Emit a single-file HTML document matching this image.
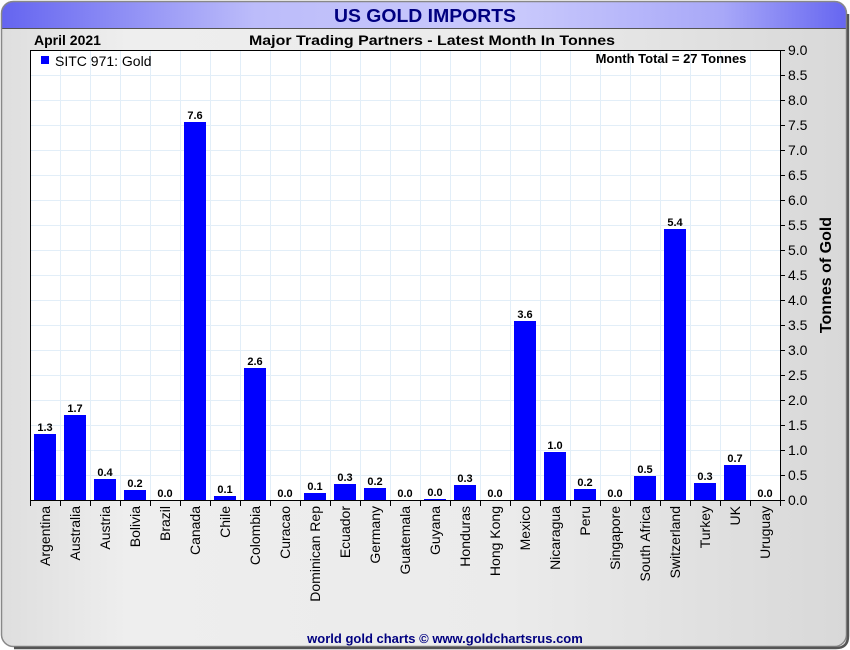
<!DOCTYPE html>
<html><head><style>
html,body{margin:0;padding:0;width:850px;height:650px;overflow:hidden;background:#fff}
svg{display:block;font-family:"Liberation Sans",Arial,sans-serif}
</style></head><body>
<svg width="850" height="650" viewBox="0 0 850 650">
<defs>
<linearGradient id="bg" x1="0" y1="0" x2="1" y2="0"><stop offset="0" stop-color="#dedede"/><stop offset="0.15" stop-color="#eeeeee"/><stop offset="0.6" stop-color="#ebebeb"/><stop offset="1" stop-color="#d8d8d8"/></linearGradient>
<linearGradient id="tb" x1="0" y1="0" x2="1" y2="0"><stop offset="0" stop-color="#6464f0"/><stop offset="0.3" stop-color="#bcbcfa"/><stop offset="0.6" stop-color="#cacafc"/><stop offset="0.85" stop-color="#a8a8f8"/><stop offset="1" stop-color="#6464f0"/></linearGradient>
<clipPath id="cp"><rect x="1" y="1" width="846" height="646" rx="12"/></clipPath>
</defs>
<rect x="0" y="0" width="850" height="650" fill="#fff"/>
<g clip-path="url(#cp)">
<rect x="0" y="0" width="850" height="650" fill="url(#bg)"/>
<rect x="0" y="0" width="850" height="28" fill="url(#tb)"/>
<line x1="0" y1="28.5" x2="850" y2="28.5" stroke="#555" stroke-width="1"/>
</g>
<rect x="1.5" y="1.5" width="845" height="645" rx="12" fill="none" stroke="#888" stroke-width="1.5"/>
<path d="M848 14 V636 Q848 648 836 648 H14" fill="none" stroke="#555" stroke-width="2.5"/>
<text x="425" y="22" text-anchor="middle" font-size="18" font-weight="bold" fill="#000080" textLength="182" lengthAdjust="spacingAndGlyphs">US GOLD IMPORTS</text>
<text x="34" y="45" font-size="14" font-weight="bold" fill="#000">April 2021</text>
<text x="432" y="45" text-anchor="middle" font-size="14" font-weight="bold" fill="#000" textLength="366" lengthAdjust="spacingAndGlyphs">Major Trading Partners - Latest Month In Tonnes</text>
<rect x="30" y="50" width="750" height="450" fill="#fff"/>
<g stroke="#e2eef8" stroke-width="1">
<path d="M60.5 50V500M90.5 50V500M120.5 50V500M150.5 50V500M180.5 50V500M210.5 50V500M240.5 50V500M270.5 50V500M300.5 50V500M330.5 50V500M360.5 50V500M390.5 50V500M420.5 50V500M450.5 50V500M480.5 50V500M510.5 50V500M540.5 50V500M570.5 50V500M600.5 50V500M630.5 50V500M660.5 50V500M690.5 50V500M720.5 50V500M750.5 50V500"/>
<path d="M30 75.5H780M30 100.5H780M30 125.5H780M30 150.5H780M30 175.5H780M30 200.5H780M30 225.5H780M30 250.5H780M30 275.5H780M30 300.5H780M30 325.5H780M30 350.5H780M30 375.5H780M30 400.5H780M30 425.5H780M30 450.5H780M30 475.5H780"/>
</g>
<rect x="30.5" y="50.5" width="750" height="450" fill="none" stroke="#000" stroke-width="1"/>
<g stroke="#000" stroke-width="1">
<path d="M30.5 500V506M60.5 500V506M90.5 500V506M120.5 500V506M150.5 500V506M180.5 500V506M210.5 500V506M240.5 500V506M270.5 500V506M300.5 500V506M330.5 500V506M360.5 500V506M390.5 500V506M420.5 500V506M450.5 500V506M480.5 500V506M510.5 500V506M540.5 500V506M570.5 500V506M600.5 500V506M630.5 500V506M660.5 500V506M690.5 500V506M720.5 500V506M750.5 500V506M780.5 500V506"/>
<path d="M780 50.5h5M780 75.5h5M780 100.5h5M780 125.5h5M780 150.5h5M780 175.5h5M780 200.5h5M780 225.5h5M780 250.5h5M780 275.5h5M780 300.5h5M780 325.5h5M780 350.5h5M780 375.5h5M780 400.5h5M780 425.5h5M780 450.5h5M780 475.5h5M780 500.5h5"/>
</g>
<g font-size="14" fill="#000">
<text x="788" y="55">9.0</text><text x="788" y="80">8.5</text><text x="788" y="105">8.0</text><text x="788" y="130">7.5</text><text x="788" y="155">7.0</text><text x="788" y="180">6.5</text><text x="788" y="205">6.0</text><text x="788" y="230">5.5</text><text x="788" y="255">5.0</text><text x="788" y="280">4.5</text><text x="788" y="305">4.0</text><text x="788" y="330">3.5</text><text x="788" y="355">3.0</text><text x="788" y="380">2.5</text><text x="788" y="405">2.0</text><text x="788" y="430">1.5</text><text x="788" y="455">1.0</text><text x="788" y="480">0.5</text><text x="788" y="505">0.0</text>
</g>
<text transform="translate(831,275) rotate(-90)" text-anchor="middle" font-size="16" font-weight="bold">Tonnes of Gold</text>
<rect x="41" y="56" width="8" height="8" fill="#0000ff"/>
<text x="55" y="66" font-size="14">SITC 971: Gold</text>
<text x="671" y="63" text-anchor="middle" font-size="13" font-weight="bold">Month Total = 27 Tonnes</text>
<g fill="#0000ff">
<rect x="34" y="434" width="22" height="66"/>
<rect x="64" y="415" width="22" height="85"/>
<rect x="94" y="479" width="22" height="21"/>
<rect x="124" y="490" width="22" height="10"/>
<rect x="184" y="122" width="22" height="378"/>
<rect x="214" y="496" width="22" height="4"/>
<rect x="244" y="368" width="22" height="132"/>
<rect x="304" y="493" width="22" height="7"/>
<rect x="334" y="484" width="22" height="16"/>
<rect x="364" y="488" width="22" height="12"/>
<rect x="424" y="499" width="22" height="1"/>
<rect x="454" y="485" width="22" height="15"/>
<rect x="514" y="321" width="22" height="179"/>
<rect x="544" y="452" width="22" height="48"/>
<rect x="574" y="489" width="22" height="11"/>
<rect x="634" y="476" width="22" height="24"/>
<rect x="664" y="229" width="22" height="271"/>
<rect x="694" y="483" width="22" height="17"/>
<rect x="724" y="465" width="22" height="35"/>
</g>
<g font-size="11" font-weight="bold" text-anchor="middle" fill="#000">
<text x="45" y="431">1.3</text><text x="75" y="412">1.7</text><text x="105" y="476">0.4</text><text x="135" y="487">0.2</text><text x="165" y="497">0.0</text><text x="195" y="119">7.6</text><text x="225" y="493">0.1</text><text x="255" y="365">2.6</text><text x="285" y="497">0.0</text><text x="315" y="490">0.1</text><text x="345" y="481">0.3</text><text x="375" y="485">0.2</text><text x="405" y="497">0.0</text><text x="435" y="496">0.0</text><text x="465" y="482">0.3</text><text x="495" y="497">0.0</text><text x="525" y="318">3.6</text><text x="555" y="449">1.0</text><text x="585" y="486">0.2</text><text x="615" y="497">0.0</text><text x="645" y="473">0.5</text><text x="675" y="226">5.4</text><text x="705" y="480">0.3</text><text x="735" y="462">0.7</text><text x="765" y="497">0.0</text>
</g>
<g font-size="14" text-anchor="end" fill="#000">
<text transform="translate(50,506) rotate(-90)">Argentina</text>
<text transform="translate(80,506) rotate(-90)">Australia</text>
<text transform="translate(110,506) rotate(-90)">Austria</text>
<text transform="translate(140,506) rotate(-90)">Bolivia</text>
<text transform="translate(170,506) rotate(-90)">Brazil</text>
<text transform="translate(200,506) rotate(-90)">Canada</text>
<text transform="translate(230,506) rotate(-90)">Chile</text>
<text transform="translate(260,506) rotate(-90)">Colombia</text>
<text transform="translate(290,506) rotate(-90)">Curacao</text>
<text transform="translate(320,506) rotate(-90)">Dominican Rep</text>
<text transform="translate(350,506) rotate(-90)">Ecuador</text>
<text transform="translate(380,506) rotate(-90)">Germany</text>
<text transform="translate(410,506) rotate(-90)">Guatemala</text>
<text transform="translate(440,506) rotate(-90)">Guyana</text>
<text transform="translate(470,506) rotate(-90)">Honduras</text>
<text transform="translate(500,506) rotate(-90)">Hong Kong</text>
<text transform="translate(530,506) rotate(-90)">Mexico</text>
<text transform="translate(560,506) rotate(-90)">Nicaragua</text>
<text transform="translate(590,506) rotate(-90)">Peru</text>
<text transform="translate(620,506) rotate(-90)">Singapore</text>
<text transform="translate(650,506) rotate(-90)">South Africa</text>
<text transform="translate(680,506) rotate(-90)">Switzerland</text>
<text transform="translate(710,506) rotate(-90)">Turkey</text>
<text transform="translate(740,506) rotate(-90)">UK</text>
<text transform="translate(770,506) rotate(-90)">Uruguay</text>
</g>
<text x="445" y="643" text-anchor="middle" font-size="13" font-weight="bold" fill="#000080">world gold charts © www.goldchartsrus.com</text>
</svg>
</body></html>
